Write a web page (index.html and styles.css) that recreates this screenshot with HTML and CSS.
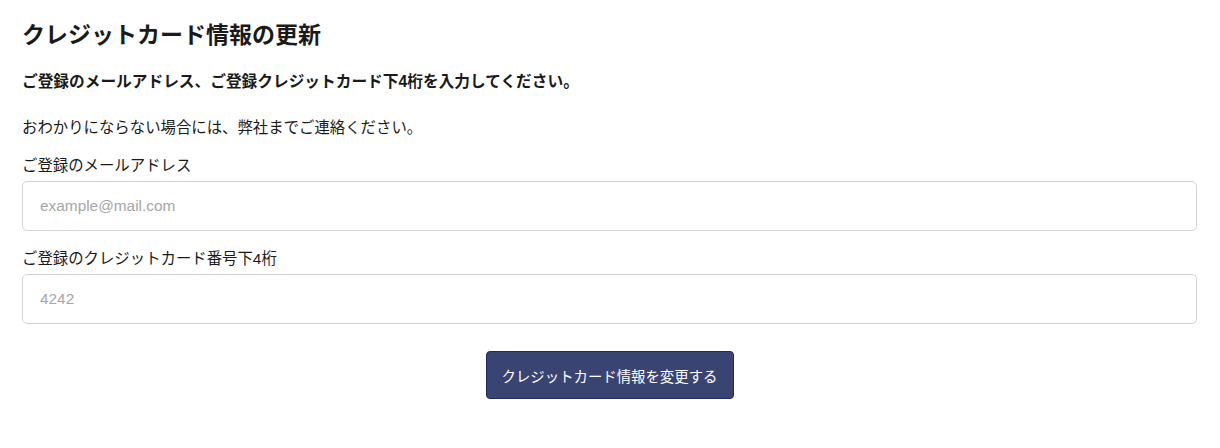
FILE: index.html
```html
<!DOCTYPE html>
<html lang="ja">
<head>
    <meta charset="UTF-8">
    <meta name="viewport" content="width=device-width, initial-scale=1.0">
    <title>クレジットカード情報の更新</title>
    <link rel="stylesheet" href="styles.css">
</head>
<body>
    <div class="container">
        <form action="" id="form">
            <h1>クレジットカード情報の更新</h1>
            <p class="lead">ご登録のメールアドレス、ご登録クレジットカード下4桁を入力してください。</p>
            <p class="note">おわかりにならない場合には、弊社までご連絡ください。</p>
            <div class="input-group">
                <label for="email">ご登録のメールアドレス</label>
                <input type="text" id="email" name="email" placeholder="example@mail.com">
            </div>
            <div class="input-group">
                <label for="last4">ご登録のクレジットカード番号下4桁</label>
                <input type="text" id="last4" name="last4" placeholder="4242">
            </div>
            <div class="actions">
                <button type="submit">クレジットカード情報を変更する</button>
            </div>
        </form>
    </div>
</body>
</html>
```

FILE: styles.css
```css
body {
    margin: 0;
    background: #fff;
    color: #1a1a1a;
    font-family: "Liberation Sans", "Noto Sans CJK JP", sans-serif;
}

.container {
    padding: 19px 23px 0 22px;
}

h1 {
    font-size: 23px;
    font-weight: bold;
    margin: 0 0 21px;
    line-height: 32px;
}

.lead {
    font-size: 15.7px;
    font-weight: bold;
    margin: 0 0 26px;
    line-height: 20px;
}

.note {
    font-size: 15.4px;
    margin: 0 0 18px;
    line-height: 20px;
}

.input-group {
    display: flex;
    flex-direction: column;
    margin-bottom: 18px;
}

.input-group label {
    font-size: 15.4px;
    line-height: 20px;
    margin-bottom: 5px;
}

.input-group input {
    height: 50px;
    box-sizing: border-box;
    border: 1px solid #d4d4d4;
    border-radius: 5px;
    padding: 0 17px;
    font-size: 15.4px;
    font-family: "Liberation Sans", "Noto Sans CJK JP", sans-serif;
    color: #333;
}

.input-group input::placeholder {
    color: #a6a6a6;
}

.input-group input:focus {
    outline: 0;
    border-color: #394370;
}

.actions {
    display: flex;
    justify-content: center;
    padding-top: 9px;
}

.actions button {
    width: 248px;
    height: 48px;
    background-color: #3a4472;
    border: 1px solid #1f2a5e;
    border-radius: 4px;
    color: #fff;
    font-size: 14.4px;
    font-family: "Liberation Sans", "Noto Sans CJK JP", sans-serif;
    cursor: pointer;
}
```
